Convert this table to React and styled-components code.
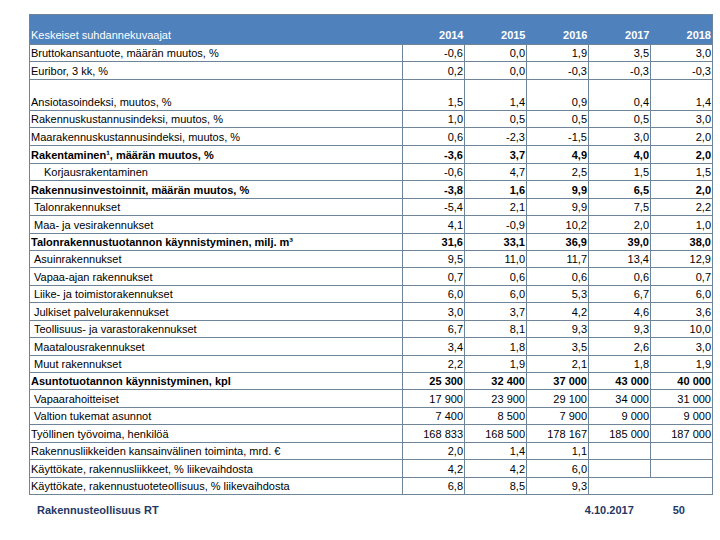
import React from "react";
import styled, { createGlobalStyle } from "styled-components";

const years = ["2014", "2015", "2016", "2017", "2018"];

const rows = [
  { label: "Bruttokansantuote, määrän muutos, %", v: ["-0,6", "0,0", "1,9", "3,5", "3,0"] },
  { label: "Euribor, 3 kk, %", v: ["0,2", "0,0", "-0,3", "-0,3", "-0,3"] },
  { label: "Ansiotasoindeksi, muutos, %", v: ["1,5", "1,4", "0,9", "0,4", "1,4"], h: 31 },
  { label: "Rakennuskustannusindeksi, muutos, %", v: ["1,0", "0,5", "0,5", "0,5", "3,0"] },
  { label: "Maarakennuskustannusindeksi, muutos, %", v: ["0,6", "-2,3", "-1,5", "3,0", "2,0"], h: 18 },
  { label: "Rakentaminen¹, määrän muutos, %", v: ["-3,6", "3,7", "4,9", "4,0", "2,0"], bold: true },
  { label: "Korjausrakentaminen", v: ["-0,6", "4,7", "2,5", "1,5", "1,5"], indent: 13 },
  { label: "Rakennusinvestoinnit, määrän muutos, %", v: ["-3,8", "1,6", "9,9", "6,5", "2,0"], bold: true },
  { label: "Talonrakennukset", v: ["-5,4", "2,1", "9,9", "7,5", "2,2"], indent: 3 },
  { label: "Maa- ja vesirakennukset", v: ["4,1", "-0,9", "10,2", "2,0", "1,0"], indent: 3 },
  { label: "Talonrakennustuotannon käynnistyminen, milj. m³", v: ["31,6", "33,1", "36,9", "39,0", "38,0"], bold: true },
  { label: "Asuinrakennukset", v: ["9,5", "11,0", "11,7", "13,4", "12,9"], indent: 3 },
  { label: "Vapaa-ajan rakennukset", v: ["0,7", "0,6", "0,6", "0,6", "0,7"], indent: 3 },
  { label: "Liike- ja toimistorakennukset", v: ["6,0", "6,0", "5,3", "6,7", "6,0"], indent: 3 },
  { label: "Julkiset palvelurakennukset", v: ["3,0", "3,7", "4,2", "4,6", "3,6"], indent: 3 },
  { label: "Teollisuus- ja varastorakennukset", v: ["6,7", "8,1", "9,3", "9,3", "10,0"], indent: 3 },
  { label: "Maatalousrakennukset", v: ["3,4", "1,8", "3,5", "2,6", "3,0"], indent: 3 },
  { label: "Muut rakennukset", v: ["2,2", "1,9", "2,1", "1,8", "1,9"], indent: 3 },
  { label: "Asuntotuotannon käynnistyminen, kpl", v: ["25 300", "32 400", "37 000", "43 000", "40 000"], bold: true },
  { label: "Vapaarahoitteiset", v: ["17 900", "23 900", "29 100", "34 000", "31 000"], indent: 3 },
  { label: "Valtion tukemat asunnot", v: ["7 400", "8 500", "7 900", "9 000", "9 000"], indent: 3 },
  { label: "Työllinen työvoima, henkilöä", v: ["168 833", "168 500", "178 167", "185 000", "187 000"] },
  { label: "Rakennusliikkeiden kansainvälinen toiminta, mrd. €", v: ["2,0", "1,4", "1,1", "", ""] },
  { label: "Käyttökate, rakennusliikkeet, % liikevaihdosta", v: ["4,2", "4,2", "6,0", "", ""] },
  { label: "Käyttökate, rakennustuoteteollisuus, % liikevaihdosta", v: ["6,8", "8,5", "9,3"], merge: true },
];

export default function App() {
  return (
    <>
      <GlobalStyle />
      <Page>
        <Table>
          <colgroup>
            <LabelCol />
            {years.map((y) => (
              <YearCol key={y} />
            ))}
          </colgroup>
          <thead>
            <tr>
              <HeadCell>Keskeiset suhdannekuvaajat</HeadCell>
              {years.map((y) => (
                <YearCell key={y}>{y}</YearCell>
              ))}
            </tr>
          </thead>
          <tbody>
            {rows.map((r) => (
              <Row key={r.label} $h={r.h}>
                <Label $bold={r.bold} $indent={r.indent}>
                  {r.label}
                </Label>
                {r.v.map((v, i) => (
                  <Num key={i} $bold={r.bold}>
                    {v}
                  </Num>
                ))}
                {r.merge && <Num colSpan={2} />}
              </Row>
            ))}
          </tbody>
        </Table>
        <Footer>
          <span>Rakennusteollisuus RT</span>
          <FootDate>4.10.2017</FootDate>
          <span>50</span>
        </Footer>
      </Page>
    </>
  );
}

const GlobalStyle = createGlobalStyle`
  body {
    margin: 0;
    background: #fff;
    font-family: "Liberation Sans", Arial, sans-serif;
  }
`;

const Page = styled.div`
  width: 720px;
  height: 540px;
  padding: 14px 8px 0 29px;
  box-sizing: border-box;
`;

const Table = styled.table`
  border-collapse: collapse;
  table-layout: fixed;
  width: 683px;
  font-size: 11px;
  color: #000;
  border: 1px solid #6e8498;
`;

const LabelCol = styled.col`
  width: 373px;
`;

const YearCol = styled.col`
  width: 62px;
`;

const HeadCell = styled.th`
  height: 27px;
  background: #4f81bd;
  color: #fff;
  font-weight: normal;
  text-align: left;
  vertical-align: bottom;
  padding: 0 0 2px 1px;
  line-height: 13px;
  white-space: nowrap;
  border-bottom: 1px solid #6e8498;
`;

const YearCell = styled(HeadCell)`
  font-weight: bold;
  text-align: right;
  padding: 0 1px 2px 0;
`;

const Row = styled.tr`
  height: ${(p) => p.$h || 17.45}px;
`;

const Label = styled.td`
  padding: 0 0 1px ${(p) => 1 + (p.$indent || 0)}px;
  font-weight: ${(p) => (p.$bold ? "bold" : "normal")};
  text-align: left;
  vertical-align: bottom;
  line-height: 13px;
  white-space: nowrap;
  border-top: 1px solid #6e8498;
  border-bottom: 1px solid #6e8498;
`;

const Num = styled.td`
  padding: 0 1px 1px 0;
  font-weight: ${(p) => (p.$bold ? "bold" : "normal")};
  text-align: right;
  vertical-align: bottom;
  line-height: 13px;
  white-space: nowrap;
  border: 1px solid #6e8498;
`;

const Footer = styled.div`
  display: flex;
  align-items: center;
  margin-top: 9px;
  padding: 0 27px 0 8px;
  color: #1f3864;
  font-size: 11px;
  font-weight: bold;
`;

const FootDate = styled.span`
  margin-left: auto;
  margin-right: 39px;
`;
